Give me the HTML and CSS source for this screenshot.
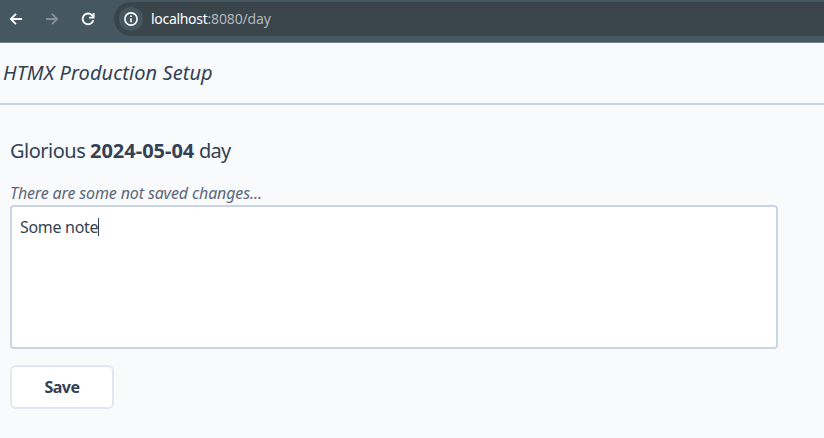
FILE: index.html
```html
<!DOCTYPE html>
<html lang="en">
<head>
<meta charset="utf-8">
<title>HTMX Production Setup</title>
<link rel="stylesheet" href="styles.css">
</head>
<body>
<div class="toolbar">
  <svg class="nav" viewBox="0 0 16 16"><path d="M14 8H3M8 2.8 2.8 8 8 13.2"/></svg>
  <svg class="nav disabled" viewBox="0 0 16 16"><path d="M2 8h11M8 2.8 13.2 8 8 13.2"/></svg>
  <svg class="nav" viewBox="0 0 16 16"><path d="M13.3 9.2A5.4 5.4 0 1 1 12 4.2L13.5 5.8"/><path d="M13.6 2v4.6H9"/></svg>
  <div class="address">
    <span class="info"><svg viewBox="0 0 16 16"><circle cx="8" cy="8" r="6.1"/><path d="M8 7.2v4M8 4.4v1.7"/></svg></span>
    <span class="url"><span class="host">localhost</span><span class="path">:8080/day</span></span>
  </div>
</div>
<header class="header"><span class="brand">HTMX Production Setup</span></header>
<main class="main">
  <h1 class="title"><span>Glorious</span> <b>2024-05-04</b> <span class="unit">day</span></h1>
  <p class="status">There are some not saved changes...</p>
  <div class="note" role="textbox"><span class="text">Some note</span><span class="caret"></span></div>
  <button class="save">Save</button>
</main>
</body>
</html>
```
FILE: styles.css
```css
* { box-sizing: border-box; }
body {
  margin: 0;
  height: 438px;
  overflow: hidden;
  background: #f8fafc;
  color: #334155;
  font-family: "Noto Sans", "Open Sans", sans-serif;
}
.toolbar {
  display: flex;
  align-items: center;
  height: 43px;
  padding: 0 0 5px 8px;
  background: #455760;
  border-bottom: 1px solid #738590;
}
.nav {
  flex: none;
  width: 16px;
  height: 16px;
  margin-right: 20px;
  fill: none;
  stroke: #fff;
  stroke-width: 1.8;
}
.nav.disabled { stroke: #869198; }
.nav:nth-child(3) { margin-right: 18px; }
.address {
  display: flex;
  align-items: center;
  flex: 1;
  height: 34px;
  padding-left: 5px;
  background: #39454b;
  border-radius: 17px 0 0 17px;
}
.info {
  display: flex;
  align-items: center;
  justify-content: center;
  width: 24px;
  height: 24px;
  margin-right: 8px;
  border-radius: 50%;
  background: #455760;
}
.info svg {
  width: 16px;
  height: 16px;
  fill: none;
  stroke: #fff;
  stroke-width: 1.6;
}
.url { font-size: 14px; line-height: 20px; white-space: nowrap; }
.host { color: #fff; letter-spacing: -0.3px; }
.path { color: #b0b7bb; letter-spacing: -0.15px; }
.header {
  height: 62px;
  padding: 16px 3px 0;
  border-bottom: 2px solid #cbd5e1;
  font-size: 20px;
  line-height: 28px;
  font-style: italic;
}
.brand { letter-spacing: 0.07px; }
.main { padding: 32px 10px 0; }
.title { margin: 0; font-size: 20px; line-height: 28px; font-weight: 400; letter-spacing: -0.5px; }
.title b { letter-spacing: 0; }
.title .unit { letter-spacing: -0.8px; }
.status {
  margin: 16px 0 0;
  font-size: 16px;
  line-height: 24px;
  font-style: italic;
  color: #5c677a;
  letter-spacing: -0.14px;
}
.note {
  display: flex;
  width: 768px;
  height: 144px;
  padding: 8px;
  background: #fff;
  border: 2px solid #cbd5e1;
  border-radius: 4px;
  font-size: 16px;
  line-height: 24px;
}
.text { letter-spacing: -0.3px; }
.caret { width: 1px; height: 18px; margin-top: 3px; background: #334155; }
.save {
  display: block;
  width: 104px;
  height: 44px;
  margin-top: 16px;
  padding: 0;
  background: #fff;
  border: 2px solid #e2e8f0;
  border-radius: 6px;
  color: #334155;
  font: 700 16px/24px "Noto Sans", "Open Sans", sans-serif;
  letter-spacing: -0.5px;
}
```
